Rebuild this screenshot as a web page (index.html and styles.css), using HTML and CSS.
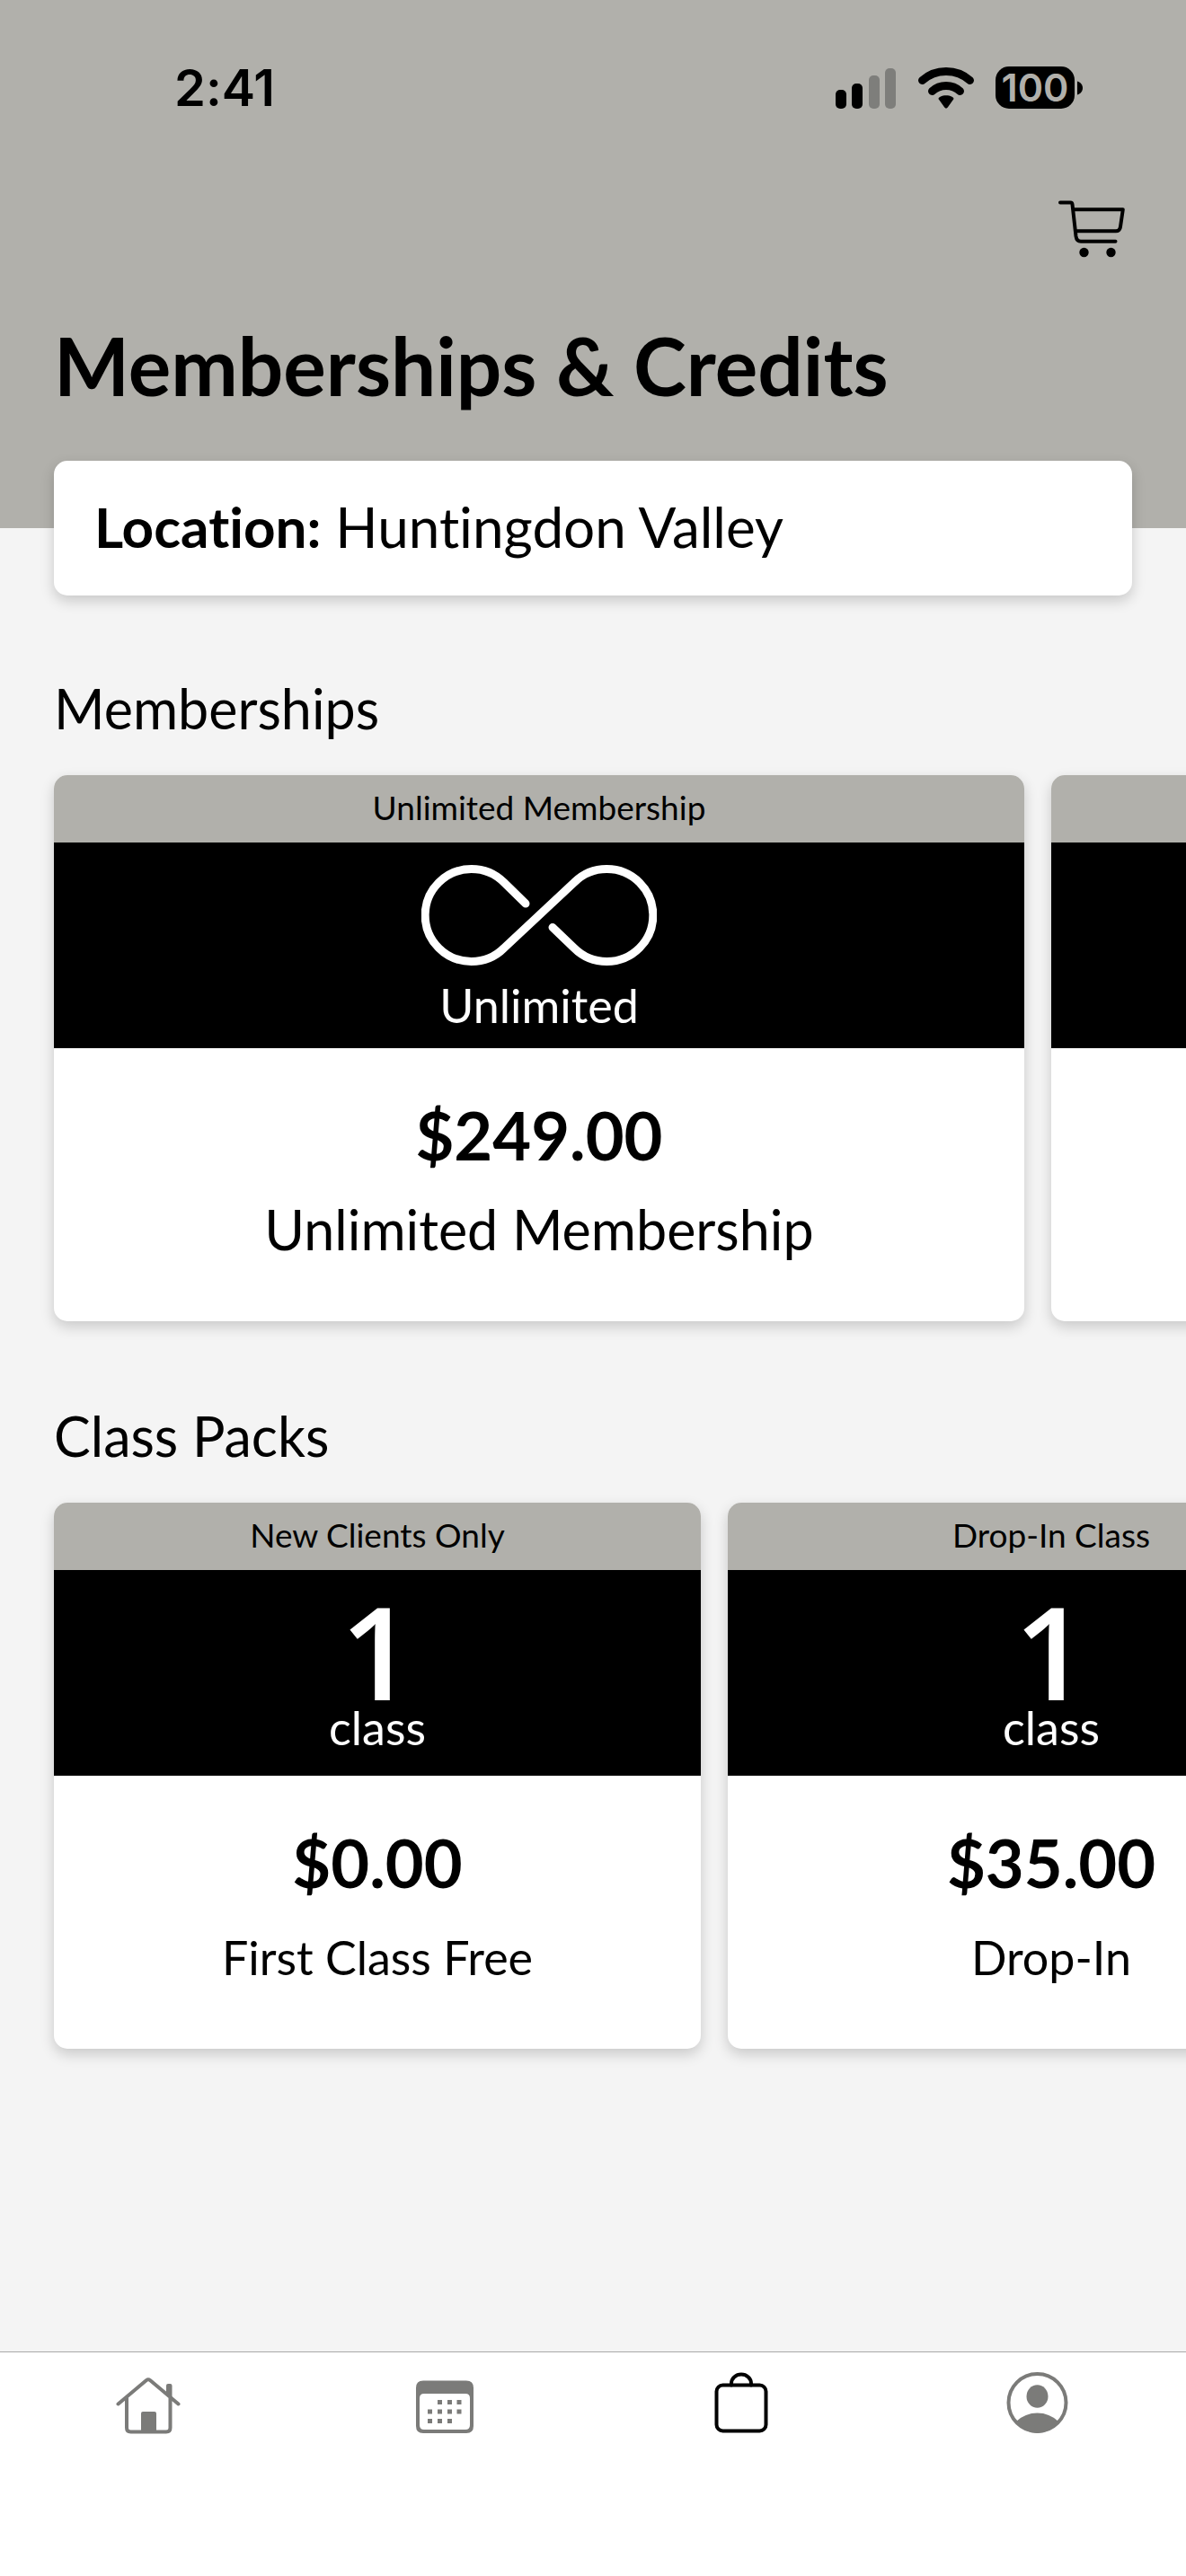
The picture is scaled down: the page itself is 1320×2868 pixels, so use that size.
FILE: index.html
```html
<!DOCTYPE html>
<html lang="en">
<head>
  <meta charset="UTF-8" />
  <meta name="viewport" content="width=device-width, initial-scale=1.0"/>
  <title>Memberships &amp; Credits</title>
  <link rel="stylesheet" href="styles.css">
</head>
<body>
  <header class="header">
    <div class="status-bar">
      <span class="time">2:41</span>
      <div class="status-icons">
        <svg width="68" height="47" viewBox="0 0 68 47" aria-hidden="true">
          <rect x="0" y="26" width="12" height="21" rx="5"/>
          <rect x="18" y="19" width="12" height="28" rx="5"/>
          <rect class="signal-off" x="37" y="10" width="12" height="37" rx="5"/>
          <rect class="signal-off" x="55" y="2" width="12" height="45" rx="5"/>
        </svg>
        <svg width="62" height="47" viewBox="0 0 62 47" aria-hidden="true">
          <path class="wifi-arc" d="M4.500 15.500C19 2 43 2 57.500 15.500"/>
          <path class="wifi-arc" d="M15.500 27.500C24 19.500 38 19.500 46.500 27.500"/>
          <path d="M23.500 37.500C21.500 35.500 23 34.500 24.500 33.700C28.500 31.800 33.500 31.800 37.500 33.700C39 34.500 40.500 35.500 38.500 37.500L32.800 45.500C31.500 47 30.500 47 29.200 45.500Z"/>
        </svg>
        <div class="battery">
          <span class="battery-level">100</span>
          <svg width="6" height="16" viewBox="0 0 6 16" aria-hidden="true">
            <path d="M0 0.500C8 3 8 13 0 15.500Z"/>
          </svg>
        </div>
      </div>
    </div>

    <div class="toolbar">
      <button class="cart" aria-label="Cart">
        <svg width="74" height="64" viewBox="0 0 74 64" aria-hidden="true">
          <path class="cart-line" d="M2 2.500H13.500Q15.300 2.500 15.500 4.500L19.500 40Q20.300 45.800 25 45.800H63.500M17 10.300H71.800L69 29.500Q68.200 34.300 64 34.300H20"/>
          <circle cx="28.500" cy="58" r="5.200"/>
          <circle cx="58.500" cy="58" r="5.200"/>
        </svg>
      </button>
    </div>

    <h1>Memberships &amp; Credits</h1>
  </header>

  <main>
    <button class="location"><strong>Location:</strong> Huntingdon Valley</button>

    <section>
      <h2>Memberships</h2>
      <div class="row">
        <article class="card card-wide">
          <p class="card-tag">Unlimited Membership</p>
          <div class="card-banner">
            <svg class="infinity" width="262" height="112" viewBox="0 0 262 112" aria-hidden="true">
              <path d="M116 43L92 19.500A51.500 51.500 0 1 0 92 92.500L170 19.500A51.500 51.500 0 1 1 170 92.500L146 69.500"/>
            </svg>
            <p class="unit">Unlimited</p>
          </div>
          <div class="card-body">
            <p class="price">$249.00</p>
            <p class="name">Unlimited Membership</p>
          </div>
        </article>
        <article class="card card-wide">
          <p class="card-tag"></p>
          <div class="card-banner"></div>
          <div class="card-body"></div>
        </article>
      </div>
    </section>

    <section>
      <h2>Class Packs</h2>
      <div class="row">
        <article class="card card-pack">
          <p class="card-tag">New Clients Only</p>
          <div class="card-banner">
            <p class="count">1</p>
            <p class="unit">class</p>
          </div>
          <div class="card-body">
            <p class="price">$0.00</p>
            <p class="name">First Class Free</p>
          </div>
        </article>
        <article class="card card-pack">
          <p class="card-tag">Drop-In Class</p>
          <div class="card-banner">
            <p class="count">1</p>
            <p class="unit">class</p>
          </div>
          <div class="card-body">
            <p class="price">$35.00</p>
            <p class="name">Drop-In</p>
          </div>
        </article>
      </div>
    </section>
  </main>

  <nav class="tab-bar">
    <a href="#home" aria-label="Home">
      <svg width="72" height="70" viewBox="0 0 72 70" aria-hidden="true">
        <path class="line" d="M2.500 36.500L34 10Q36 8.500 38 10L69.500 36.500M12 30V63Q12 67.500 16.500 67.500H56Q60.500 67.500 60.500 63V30"/>
        <path class="solid" d="M56 16Q56 14 58 14H60.500Q62.500 14 62.500 16V31L56 26ZM28 47Q28 45 30 45H43Q45 45 45 47V68H28Z"/>
      </svg>
    </a>
    <a href="#schedule" aria-label="Schedule">
      <svg width="72" height="70" viewBox="0 0 72 70" aria-hidden="true">
        <path class="solid" fill-rule="evenodd" d="M12 10.500H60Q68 10.500 68 18.500V61Q68 69 60 69H12Q4 69 4 61V18.500Q4 10.500 12 10.500ZM13 25Q8 25 8 30V60Q8 65 13 65H59Q64 65 64 60V30Q64 25 59 25Z"/>
        <path class="solid" d="M28 32h5v5h-5zM39 32h5v5h-5zM49.500 32h5v5h-5zM17 42.500h5v5h-5zM28 42.500h5v5h-5zM39 42.500h5v5h-5zM49.500 42.500h5v5h-5zM17 53h5v5h-5zM28 53h5v5h-5zM39 53h5v5h-5z"/>
      </svg>
    </a>
    <a class="active" href="#shop" aria-label="Shop">
      <svg width="72" height="70" viewBox="0 0 72 70" aria-hidden="true">
        <rect class="line" x="8.500" y="15.500" width="55" height="51" rx="7"/>
        <path class="line" d="M25 15.500V13.500A11 10 0 0 1 47 13.500V15.500"/>
      </svg>
    </a>
    <a href="#profile" aria-label="Profile">
      <svg width="72" height="70" viewBox="0 0 72 70" aria-hidden="true">
        <circle class="line" cx="35.500" cy="35" r="32"/>
        <ellipse class="solid" cx="35.500" cy="28" rx="12" ry="12.800"/>
        <path class="solid" d="M12 56Q22 46.500 35.500 46.500T59 56Q49 69 35.500 69T12 56Z"/>
      </svg>
    </a>
  </nav>
</body>
</html>
```
FILE: styles.css
```css
* {
  box-sizing: border-box;
}

body {
  margin: 0;
  min-height: 100vh;
  display: flex;
  flex-direction: column;
  background: #f4f4f4;
  font-family: Lato, sans-serif;
  font-variant-ligatures: none;
  color: #000;
}

h1, h2, p {
  margin: 0;
}

button {
  border: none;
  background: none;
  padding: 0;
  font-family: inherit;
  font-variant-ligatures: inherit;
  color: inherit;
  cursor: pointer;
}

svg {
  display: block;
}

.header {
  background: #b1b0ab;
  padding: 74px 60px 131px;
}

.status-bar {
  display: flex;
  justify-content: space-between;
  align-items: center;
  height: 47px;
  padding: 0 55px 0 134px;
}

.time {
  font-family: Inter, sans-serif;
  font-size: 56px;
  font-weight: 600;
}

.status-icons {
  display: flex;
  align-items: center;
  gap: 24px;
}

.signal-off {
  fill: #7e7e7b;
}

.wifi-arc {
  fill: none;
  stroke: #000;
  stroke-width: 9;
  stroke-linecap: round;
}

.battery {
  display: flex;
  align-items: center;
  gap: 3px;
}

.battery-level {
  width: 88px;
  height: 47px;
  border-radius: 15px;
  background: #000;
  color: #b1b0ab;
  font-family: Inter, sans-serif;
  font-size: 43px;
  font-weight: 600;
  line-height: 47px;
  text-align: center;
}

.toolbar {
  display: flex;
  justify-content: flex-end;
  padding: 102px 8px 0 0;
}

.cart-line {
  fill: none;
  stroke: #000;
  stroke-width: 4;
  stroke-linecap: round;
  stroke-linejoin: round;
}

h1 {
  margin-top: 70px;
  font-size: 89px;
  font-weight: 700;
  line-height: 100px;
}

main {
  padding-bottom: 60px;
}

.location {
  display: block;
  width: calc(100% - 120px);
  height: 150px;
  margin: -75px 60px 0;
  padding: 0 45px 4px;
  border-radius: 15px;
  background: #fff;
  box-shadow: 0 6px 15px rgba(0, 0, 0, 0.18);
  font-size: 62px;
  text-align: left;
}

section {
  margin-top: 90px;
}

h2 {
  padding: 0 60px;
  font-size: 61px;
  font-weight: 400;
  line-height: 72px;
}

/* the padding leaves room for the card shadows inside the scroller */
.row {
  display: flex;
  gap: 30px;
  margin-bottom: -28px;
  padding: 38px 60px 30px;
  overflow-x: auto;
  scrollbar-width: none;
}

.card {
  flex-shrink: 0;
  border-radius: 15px;
  background: #fff;
  box-shadow: 0 6px 15px rgba(0, 0, 0, 0.18);
  text-align: center;
}

.card-wide {
  flex-basis: 90%;
}

.card-pack {
  flex-basis: 60%;
}

.card-tag {
  height: 75px;
  border-radius: 15px 15px 0 0;
  background: #b1b0ab;
  font-size: 37px;
  line-height: 72px;
}

.card-banner {
  display: flex;
  flex-direction: column;
  align-items: center;
  justify-content: flex-end;
  height: 229px;
  padding-bottom: 18px;
  background: #000;
  color: #fff;
}

.card-pack .card-banner {
  padding-bottom: 24px;
}

.infinity {
  margin-bottom: 14px;
  fill: none;
  stroke: #fff;
  stroke-width: 9;
  stroke-linecap: round;
}

.count {
  font-family: "Open Sans", sans-serif;
  font-size: 144px;
  font-weight: 600;
  line-height: 112px;
}

.unit {
  font-size: 52px;
  line-height: 60px;
}

.card-body {
  padding: 57px 0 67px;
}

.price {
  font-size: 74px;
  font-weight: 700;
  line-height: 80px;
}

.name {
  margin-top: 30px;
  font-size: 61px;
  line-height: 70px;
}

.card-pack .name {
  font-size: 52px;
}

.tab-bar {
  display: flex;
  height: 250px;
  margin-top: auto;
  padding-top: 21px;
  border-top: 1px solid #a9a9a9;
  background: #fff;
}

.tab-bar a {
  flex: 1;
  display: flex;
  justify-content: center;
  align-items: flex-start;
  color: #7b7b79;
}

.tab-bar .active {
  color: #000;
}

.line {
  fill: none;
  stroke: currentColor;
  stroke-width: 4;
  stroke-linecap: round;
  stroke-linejoin: round;
}

.solid {
  fill: currentColor;
}
```
